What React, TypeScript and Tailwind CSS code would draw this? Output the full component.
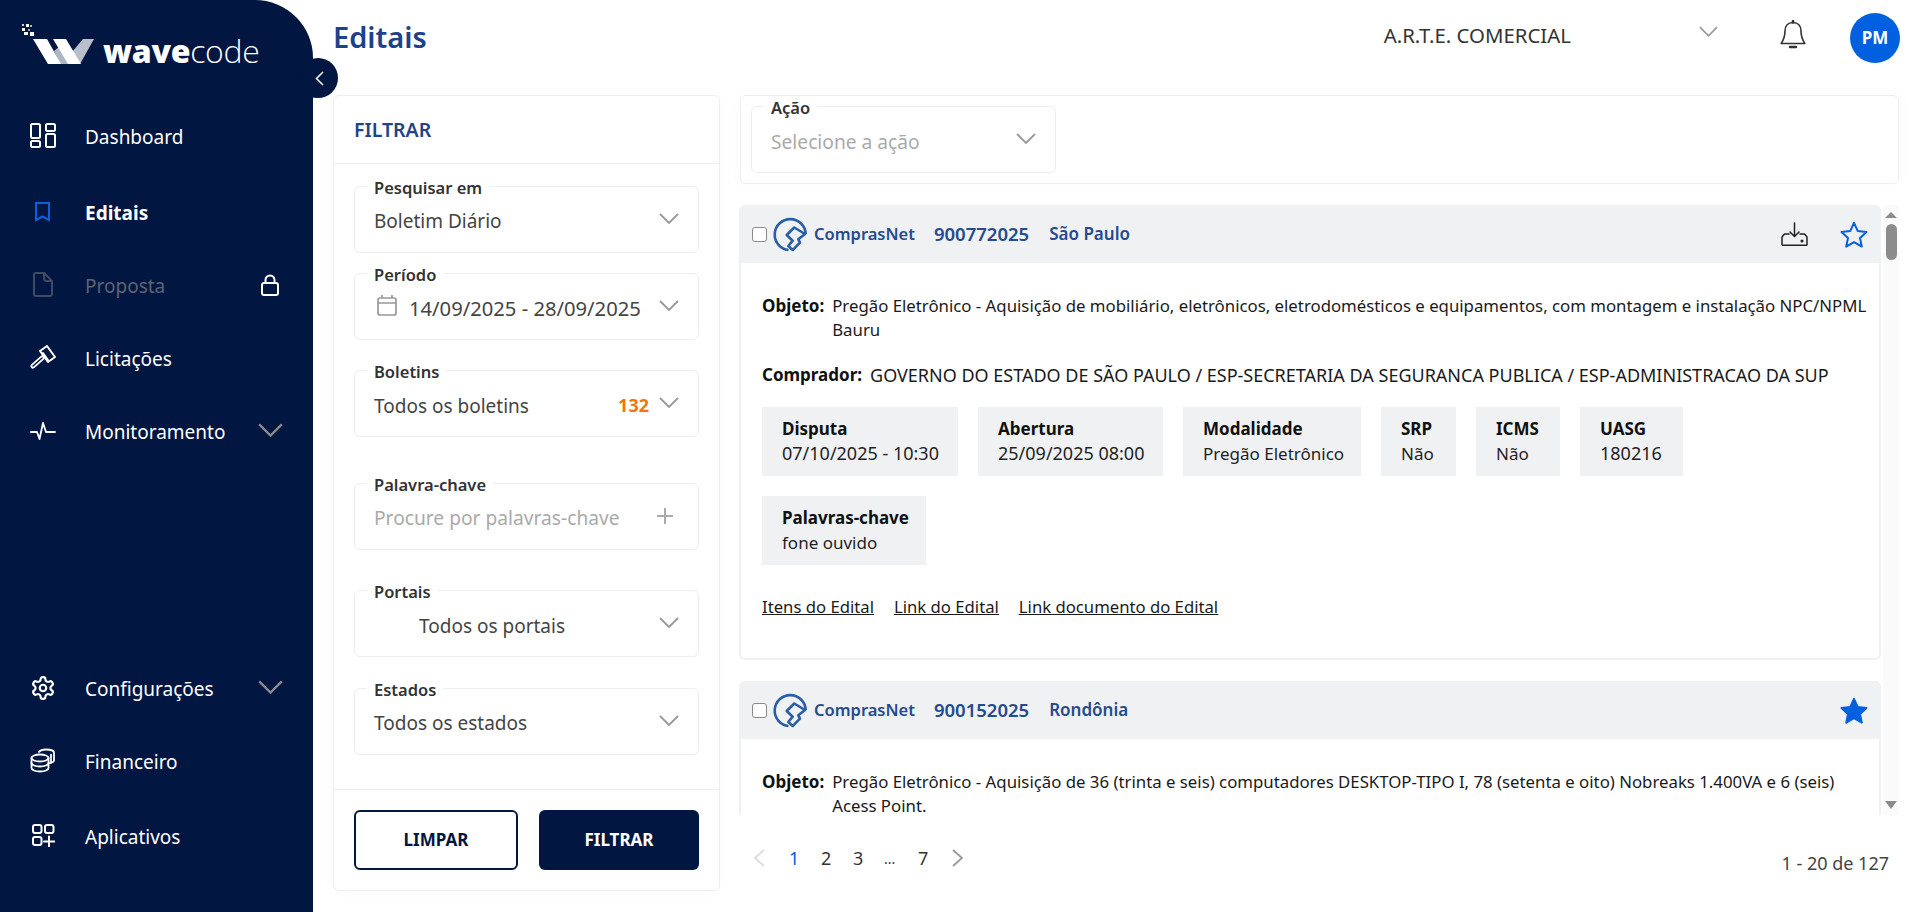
import React from "react";

const FF = "font-['Noto_Sans',sans-serif]";

function Chevron({ className = "" }: { className?: string }) {
  return (
    <svg viewBox="0 0 20 11" fill="none" stroke="currentColor" strokeWidth="1.800" className={className}>
      <path d="M1 1l9 9 9-9" />
    </svg>
  );
}

function Logo() {
  return (
    <div className="flex items-start">
      <svg width="98" height="70" viewBox="0 0 98 70" className="shrink-0">
        <g fill="#fff">
          <rect x="22" y="24" width="2" height="2" opacity=".8" />
          <rect x="26" y="24" width="3" height="3" />
          <rect x="30" y="25" width="2" height="2" opacity=".7" />
          <rect x="22" y="28" width="3" height="3" />
          <rect x="28" y="29" width="2" height="2" opacity=".6" />
          <rect x="24" y="32" width="4" height="3" />
          <rect x="30" y="32" width="4" height="4" />
        </g>
        <polygon points="54,51 60,46 69,64 60,64" fill="#aeb5c3" />
        <polygon points="83,39 94,39 80,64 72,52" fill="#b9c0cc" />
        <polygon points="33,39 47,39 61,64 48,64" fill="#fff" />
        <polygon points="53,39 66,39 81,64 68,64" fill="#fff" />
      </svg>
      <span className="ml-[5px] mt-[27px] text-[32px] leading-[48px] tracking-[-0.3px] text-white font-['Open_Sans',sans-serif]">
        <span className="font-extrabold">wave</span>
        <span className="font-light">code</span>
      </span>
    </div>
  );
}

function NavItem({ icon, label, h = "h-[73px]", bold, dim, right }: { icon: React.ReactNode; label: string; h?: string; bold?: boolean; dim?: boolean; right?: React.ReactNode }) {
  return (
    <div className={`${h} flex items-center pl-[29px] pr-[30px]`}>
      <div className="w-[27px] h-[27px] flex items-center justify-center shrink-0 -translate-y-[2px]">{icon}</div>
      <span className={`ml-[29px] text-[19px] ${bold ? "font-bold text-white" : dim ? "text-[#5c6475]" : "text-white"}`}>{label}</span>
      <div className="ml-auto">{right}</div>
    </div>
  );
}

const ic = { fill: "none", stroke: "currentColor", strokeWidth: 2, strokeLinecap: "round", strokeLinejoin: "round" } as const;

function Sidebar() {
  const navChevron = <Chevron className="w-[25px] h-[14px] text-[#8c8c8c] -translate-y-[3px]" />;
  return (
    <aside className="relative w-[313px] shrink-0 h-full bg-[#011640] rounded-tr-[58px] flex flex-col">
      <div className="absolute top-[58px] right-[-25px] w-[40px] h-[40px] rounded-full bg-[#011640] flex items-center justify-center">
        <svg width="9" height="15" viewBox="0 0 9 15" fill="none" stroke="#fff" strokeWidth="1.500" className="ml-[3px]"><path d="M8 1L1.500 7.500 8 14" /></svg>
      </div>
      <div className="h-[101px]"><Logo /></div>
      <NavItem label="Dashboard" icon={
        <svg width="26" height="26" viewBox="0 0 26 26" {...ic} className="text-white"><rect x="1" y="1" width="9" height="14" rx="1.500" /><rect x="16" y="1" width="9" height="7" rx="1.500" /><rect x="1" y="18" width="9" height="6" rx="1.500" /><rect x="16" y="11" width="9" height="13" rx="1.500" /></svg>
      } />
      <div className="h-[3px]" />
      <NavItem label="Editais" bold icon={
        <svg width="17" height="20" viewBox="0 0 17 20" fill="none" stroke="#0a60df" strokeWidth="2"><path d="M2 1h13v17l-6.500-3.500L2 18z" /></svg>
      } />
      <NavItem label="Proposta" dim right={
        <svg width="18" height="22" viewBox="0 0 18 22" {...ic} className="text-white -translate-x-[4px] -translate-y-[2px]"><rect x="1" y="9" width="16" height="12" rx="2" /><path d="M4.500 9V6a4.500 4.500 0 0 1 9 0v3" /></svg>
      } icon={
        <svg width="20" height="25" viewBox="0 0 20 25" {...ic} stroke="#3f4a63"><path d="M11 1H3a2 2 0 0 0-2 2v19a2 2 0 0 0 2 2h14a2 2 0 0 0 2-2V9z" /><path d="M11 1v5a3 3 0 0 0 3 3h5" /></svg>
      } />
      <NavItem label="Licitações" icon={
        <svg width="26" height="26" viewBox="0 0 26 26" {...ic} className="text-white"><path d="M10 6l7-5 8 11-7 5z" /><path d="M13 8l5 7" /><path d="M12 13L3 21" strokeWidth="5" /><path d="M12 13L3 21" stroke="#011640" strokeWidth="1.500" /></svg>
      } />
      <NavItem label="Monitoramento" right={navChevron} icon={
        <svg width="26" height="20" viewBox="0 0 26 20" {...ic} className="text-white"><path d="M1 11h6l2.500 7L13 2l3 9h9" strokeWidth="1.800" /></svg>
      } />
      <div className="mt-auto mb-[37px]">
        <NavItem label="Configurações" right={navChevron} icon={
          <svg width="26" height="26" viewBox="0 0 24 24" {...ic} className="text-white"><path d="M12.220 2h-.44a2 2 0 0 0-2 2v.180a2 2 0 0 1-1 1.730l-.430.250a2 2 0 0 1-2 0l-.150-.080a2 2 0 0 0-2.730.730l-.220.380a2 2 0 0 0 .730 2.730l.150.100a2 2 0 0 1 1 1.720v.510a2 2 0 0 1-1 1.740l-.150.090a2 2 0 0 0-.730 2.730l.220.380a2 2 0 0 0 2.730.730l.150-.080a2 2 0 0 1 2 0l.430.250a2 2 0 0 1 1 1.730V20a2 2 0 0 0 2 2h.440a2 2 0 0 0 2-2v-.180a2 2 0 0 1 1-1.730l.430-.250a2 2 0 0 1 2 0l.150.080a2 2 0 0 0 2.730-.730l.220-.390a2 2 0 0 0-.730-2.730l-.150-.080a2 2 0 0 1-1-1.740v-.500a2 2 0 0 1 1-1.740l.150-.090a2 2 0 0 0 .730-2.730l-.220-.380a2 2 0 0 0-2.730-.730l-.150.080a2 2 0 0 1-2 0l-.430-.250a2 2 0 0 1-1-1.730V4a2 2 0 0 0-2-2z" /><circle cx="12" cy="12" r="3" /></svg>
        } />
        <NavItem label="Financeiro" icon={
          <svg width="26" height="26" viewBox="0 0 26 26" {...ic} strokeWidth="1.800" className="text-white"><ellipse cx="10" cy="10" rx="8.500" ry="3.500" /><path d="M1.500 10v10c0 2 3.800 3.500 8.500 3.500s8.500-1.500 8.500-3.500V10" /><path d="M1.500 15c0 2 3.800 3.500 8.500 3.500s8.500-1.500 8.500-3.500" /><path d="M9 4c1-1.500 4-2.500 7-2.500 4.500 0 8 1.300 8 3v8c0 1.200-2 2.200-5 2.800" /><path d="M21 6.700v3.500M21 11.500v3" /></svg>
        } />
        <NavItem label="Aplicativos" h="h-[76px]" icon={
          <svg width="24" height="24" viewBox="0 0 24 24" {...ic} className="text-white"><rect x="2" y="2" width="8.500" height="8" rx="2" /><rect x="14" y="2" width="8.500" height="8" rx="2" /><rect x="2" y="14" width="8.500" height="8" rx="2" /><path d="M18 13.500v10M13 18.500h10.500" /></svg>
        } />
      </div>
    </aside>
  );
}

function Field({ label, className = "", children, chevron = true }: { label: string; className?: string; children: React.ReactNode; chevron?: boolean }) {
  return (
    <div className={`relative h-[67px] border border-[#eeeeee] rounded-[6px] pl-[19px] pr-[19px] flex items-start pt-[19px] ${className}`}>
      <span className="absolute left-[12px] top-[-9px] bg-white px-[7px] text-[16.500px] leading-[20px] font-semibold text-[#333]">{label}</span>
      <div className="flex-1 min-w-0 flex items-center h-[30px] text-[19px] text-[#444] whitespace-nowrap">{children}</div>
      {chevron && <Chevron className="w-[20px] h-[11px] text-[#999] mt-[7px] shrink-0" />}
    </div>
  );
}

function FilterPanel() {
  return (
    <section className="w-[387px] h-[796px] shrink-0 bg-white border border-[#eeeeee] rounded-[6px] flex flex-col shadow-[0_0_20px_rgba(0,0,0,0.025)]">
      <div className="h-[68px] shrink-0 border-b border-[#eeeeee] flex items-center pl-[20px] text-[19.500px] font-semibold text-[#1f4488]">FILTRAR</div>
      <div className="flex-1 pl-[20px] pr-[20px] pt-[22px]">
        <Field label="Pesquisar em">Boletim Diário</Field>
        <Field label="Período" className="mt-[20px]">
          <svg width="20" height="21" viewBox="0 0 20 21" fill="none" stroke="#999" strokeWidth="1.700" className="ml-[3px] mr-[13px] -translate-y-[3px] shrink-0"><rect x="1" y="3" width="18" height="17" rx="2" /><path d="M1 8h18M5 0v3M15 0v3" /></svg>
          <span className="text-[20.200px] -ml-[1px]">14/09/2025 - 28/09/2025</span>
        </Field>
        <Field label="Boletins" className="mt-[30px]">
          <span className="translate-y-[1px]">Todos os boletins</span>
          <span className="ml-auto mr-[10px] text-[18px] font-bold text-[#f5750a]">132</span>
        </Field>
        <Field label="Palavra-chave" className="mt-[46px]" chevron={false}>
          <span className="text-[19.200px] text-[#aaaaaa]">Procure por palavras-chave</span>
          <svg width="18" height="18" viewBox="0 0 18 18" stroke="#aaa" strokeWidth="2" className="ml-auto mr-[5px] -translate-y-[2px]"><path d="M9 1v16M1 9h16" /></svg>
        </Field>
        <Field label="Portais" className="mt-[40px]"><span className="pl-[45px] translate-y-[1px]">Todos os portais</span></Field>
        <Field label="Estados" className="mt-[31px]">Todos os estados</Field>
      </div>
      <div className="h-[101px] shrink-0 border-t border-[#eeeeee] pl-[20px] pr-[20px] pt-[20px] flex gap-[21px]">
        <button className="flex-1 h-[60px] rounded-[6px] border-2 border-[#011640] bg-white text-[17px] font-bold text-[#011640]">LIMPAR</button>
        <button className="flex-1 h-[60px] rounded-[6px] bg-[#011640] text-[17px] font-bold text-white">FILTRAR</button>
      </div>
    </section>
  );
}

function CompraLogo() {
  return (
    <svg width="35" height="35" viewBox="0 0 35 35" fill="none" stroke="#2a5fa8" strokeWidth="2.600" strokeLinejoin="round" className="shrink-0">
      <path d="M15.500 33A15.500 15.500 0 1 1 32.700 17" />
      <path d="M13.700 18L21.300 10.500 32 17 25.300 22.300 27 25.700 19.700 33 15.300 29 19.700 23.700z" />
    </svg>
  );
}

function Star({ filled }: { filled?: boolean }) {
  return (
    <svg width="28" height="27" viewBox="0 0 28 27" fill={filled ? "#0060df" : "none"} stroke="#0060df" strokeWidth="2" strokeLinejoin="round">
      <path d="M14 1.800l3.700 8.100 8.800 1-6.500 6 1.800 8.700L14 21.200l-7.800 4.400L8 16.900l-6.500-6 8.800-1z" />
    </svg>
  );
}

function Chip({ label, value, w, digits }: { label: string; value: string; w: string; digits?: boolean }) {
  return (
    <div className={`${w} h-[69px] bg-[#f0f1f3] pl-[20px] pt-[9px] leading-[25px] text-[#1f1f1f] whitespace-nowrap`}>
      <div className="text-[17px] font-bold text-[#111]">{label}</div>
      <div className={digits ? "text-[18px]" : "text-[17px]"}>{value}</div>
    </div>
  );
}

function CardHeader({ num, place, filled }: { num: string; place: string; filled?: boolean }) {
  return (
    <div className="h-[58px] bg-[#f0f1f3] rounded-t-[6px] flex items-center pl-[13px] pr-[13px] text-[17px] font-semibold text-[#234b8d] -mx-[2px] -mt-[2px] box-content">
      <span className="w-[15px] h-[15px] bg-white border border-[#8a8a8a] rounded-[3px] shrink-0" />
      <span className="ml-[6px]"><CompraLogo /></span>
      <span className="ml-[6px] text-[16.500px]">ComprasNet</span>
      <span className="ml-[19px] text-[18.500px]">{num}</span>
      <span className="ml-[20px]">{place}</span>
      <div className="ml-auto flex items-center">
        {!filled && (
          <svg width="27" height="24" viewBox="0 0 27 24" fill="none" stroke="#222" strokeWidth="1.500" strokeLinecap="round" strokeLinejoin="round" className="mr-[32px]">
            <path d="M13.500 1v13M9 10l4.500 4.500L18 10" />
            <path d="M8 12H3.500L1 15v7.500a.8.8 0 0 0 .8.8h23.400a.8.8 0 0 0 .8-.8V15l-2.500-3H19" />
            <circle cx="21" cy="19" r=".8" fill="#222" />
          </svg>
        )}
        <Star filled={filled} />
      </div>
    </div>
  );
}

function Objeto({ label, value, size }: { label: string; value: string; size: string }) {
  return (
    <div className="flex leading-[24px] text-[#1a1a1a]">
      <span className="text-[17px] font-bold text-[#111] shrink-0 mr-[8px]">{label}</span>
      <span className={size}>{value}</span>
    </div>
  );
}

function ResultsList() {
  return (
    <div className="flex h-[610px] mt-[21px] -ml-[1px]">
      <div className="w-[1142px] overflow-hidden shrink-0">
        <article className="h-[455px] border-2 border-[#f0f1f3] rounded-[6px] bg-white">
          <CardHeader num="900772025" place="São Paulo" />
          <div className="pl-[21px] pr-[6px] pt-[31px]">
            <Objeto size="text-[16.800px]" label="Objeto:" value="Pregão Eletrônico - Aquisição de mobiliário, eletrônicos, eletrodomésticos e equipamentos, com montagem e instalação NPC/NPML Bauru" />
            <div className="mt-[21px]"><Objeto size="text-[18px]" label="Comprador:" value="GOVERNO DO ESTADO DE SÃO PAULO / ESP-SECRETARIA DA SEGURANCA PUBLICA / ESP-ADMINISTRACAO DA SUP" /></div>
            <div className="mt-[20px] flex gap-x-[20px]">
              <Chip digits label="Disputa" value="07/10/2025 - 10:30" w="w-[196px]" />
              <Chip digits label="Abertura" value="25/09/2025 08:00" w="w-[185px]" />
              <Chip label="Modalidade" value="Pregão Eletrônico" w="w-[178px]" />
              <Chip label="SRP" value="Não" w="w-[75px]" />
              <Chip label="ICMS" value="Não" w="w-[84px]" />
              <Chip digits label="UASG" value="180216" w="w-[103px]" />
            </div>
            <div className="mt-[20px] flex">
              <Chip label="Palavras-chave" value="fone ouvido" w="w-[164px]" />
            </div>
            <div className="mt-[30px] flex gap-[20px] text-[16.700px] leading-[24px] underline text-[#1a1a1a]">
              <a>Itens do Edital</a><a>Link do Edital</a><a>Link documento do Edital</a>
            </div>
          </div>
        </article>
        <article className="mt-[21px] h-[400px] border-2 border-[#f0f1f3] rounded-[6px] bg-white">
          <CardHeader num="900152025" place="Rondônia" filled />
          <div className="pl-[21px] pr-[6px] pt-[31px]">
            <Objeto size="text-[16.800px]" label="Objeto:" value="Pregão Eletrônico - Aquisição de 36 (trinta e seis) computadores DESKTOP-TIPO I, 78 (setenta e oito) Nobreaks 1.400VA e 6 (seis) Acess Point." />
          </div>
        </article>
      </div>
      <div className="ml-[2px] w-[16px] bg-[#fafafa] flex flex-col items-center pt-[7px]">
        <span className="w-0 h-0 border-l-[6px] border-r-[6px] border-b-[6px] border-l-transparent border-r-transparent border-b-[#8c8c8c]" />
        <span className="mt-[6px] w-[11px] h-[36px] rounded-full bg-[#8c8c8c]" />
        <span className="mt-auto mb-[6px] w-0 h-0 border-l-[6px] border-r-[6px] border-t-[8px] border-l-transparent border-r-transparent border-t-[#8c8c8c]" />
      </div>
    </div>
  );
}

function Pagination() {
  return (
    <div className="flex items-center h-[86px] pr-[10px] -ml-[1px]">
      <div className="flex items-center text-[18px] text-[#333]">
        <svg width="12" height="18" viewBox="0 0 12 18" fill="none" stroke="#ddd" strokeWidth="1.800" className="ml-[14px]"><path d="M11 1L2 9l9 8" /></svg>
        <span className="ml-[24px] w-[10px] text-[#0060df]">1</span>
        <span className="ml-[22px] w-[10px]">2</span>
        <span className="ml-[22px] w-[10px]">3</span>
        <span className="ml-[21px] w-[14px] text-[14px]">...</span>
        <span className="ml-[20px] w-[10px]">7</span>
        <svg width="12" height="18" viewBox="0 0 12 18" fill="none" stroke="#999" strokeWidth="1.800" className="ml-[24px]"><path d="M1 1l9 8-9 8" /></svg>
      </div>
      <span className="ml-auto text-[18px] text-[#444] translate-y-[5px]">1 - 20 de 127</span>
    </div>
  );
}

export default function App() {
  return (
    <div className={`flex w-full h-[912px] overflow-hidden bg-white ${FF}`}>
      <Sidebar />
      <main className="flex-1 min-w-0 flex flex-col">
        <header className="h-[95px] flex items-start pl-[20px] pr-[20px] shrink-0">
          <h1 className="mt-[17px] text-[29px] leading-[40px] font-semibold text-[#1c428a]">Editais</h1>
          <span className="ml-auto mt-[23px] text-[20.400px] leading-[24px] text-[#333]">A.R.T.E. COMERCIAL</span>
          <Chevron className="ml-[128px] mt-[26px] w-[19px] h-[11px] text-[#999]" />
          <svg width="26" height="30" viewBox="0 0 26 30" fill="none" stroke="#333" strokeWidth="1.600" strokeLinecap="round" strokeLinejoin="round" className="ml-[62px] mt-[20px]">
            <path d="M13 2.500c-5 0-8 3.500-8 8.500 0 6-1.500 9-3.800 12.500h23.600C22.500 20 21 17 21 11c0-5-3-8.500-8-8.500z" />
            <path d="M13 1v1.500" strokeWidth="2.500" />
            <path d="M10 27h6" strokeWidth="2.500" />
          </svg>
          <div className="ml-[44px] mt-[13px] w-[50px] h-[50px] rounded-full bg-[#0060df] flex items-center justify-center text-white font-bold text-[17px]">PM</div>
        </header>
        <div className="flex pl-[20px] pr-[21px] gap-[20px]">
          <FilterPanel />
          <div className="flex-1 min-w-0 flex flex-col">
            <section className="h-[89px] bg-white border border-[#eeeeee] rounded-[6px] pl-[10px] pt-[10px] shadow-[0_0_20px_rgba(0,0,0,0.025)]">
              <Field label="Ação" className="w-[305px]"><span className="text-[19.200px] text-[#aaaaaa] translate-y-[1px]">Selecione a ação</span></Field>
            </section>
            <ResultsList />
            <Pagination />
          </div>
        </div>
      </main>
    </div>
  );
}
